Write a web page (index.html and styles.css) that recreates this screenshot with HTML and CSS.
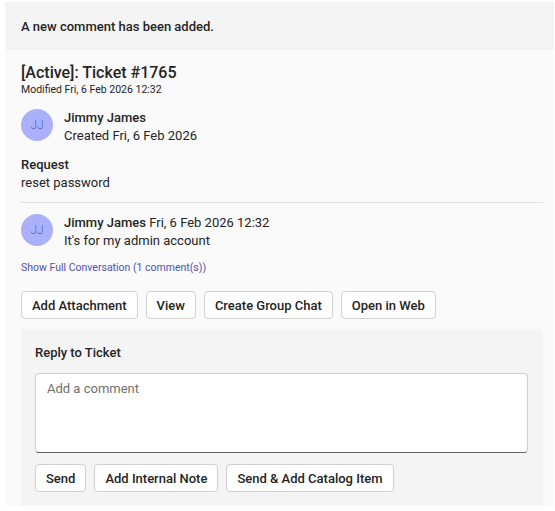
FILE: index.html
```html
<!DOCTYPE html>
<html lang="en">
<head>
  <meta charset="UTF-8" />
  <meta name="viewport" content="width=device-width, initial-scale=1.0" />
  <title>Ticket Card</title>
  <link rel="stylesheet" href="styles.css">
</head>
<body>

  <div class="card">
    <div class="card-header">A new comment has been added.</div>

    <div class="card-body">
      <div class="ticket-title">[Active]: Ticket #1765</div>
      <div class="ticket-modified">Modified Fri, 6 Feb 2026 12:32</div>

      <div class="person">
        <div class="avatar">JJ</div>
        <div class="person-text">
          <div class="person-name">Jimmy James</div>
          <div>Created Fri, 6 Feb 2026</div>
        </div>
      </div>

      <div class="field">
        <div class="field-label">Request</div>
        <div>reset password</div>
      </div>

      <div class="divider"></div>

      <div class="person comment">
        <div class="avatar">JJ</div>
        <div class="person-text">
          <div><span class="person-name">Jimmy James</span> Fri, 6 Feb 2026 12:32</div>
          <div>It's for my admin account</div>
        </div>
      </div>

      <a class="show-more" href="#">Show Full Conversation (1 comment(s))</a>

      <div class="actions">
        <button class="btn">Add Attachment</button>
        <button class="btn">View</button>
        <button class="btn">Create Group Chat</button>
        <button class="btn">Open in Web</button>
      </div>

      <div class="reply">
        <div class="reply-title">Reply to Ticket</div>
        <textarea class="reply-input" placeholder="Add a comment"></textarea>
        <div class="actions reply-actions">
          <button class="btn">Send</button>
          <button class="btn">Add Internal Note</button>
          <button class="btn">Send &amp; Add Catalog Item</button>
        </div>
      </div>
    </div>
  </div>

</body>
</html>
```

FILE: styles.css
```css
* {
  margin: 0;
  padding: 0;
  box-sizing: border-box;
}

body {
  font-family: Roboto, 'Open Sans', sans-serif;
  font-size: 13px;
  color: #242424;
  background: #ffffff;
}

.card {
  margin: 2px 1px 0 5px;
  background: #fafafa;
}

.card-header {
  height: 48px;
  display: flex;
  align-items: center;
  padding: 1px 16px 0;
  background: #f4f4f4;
  font-weight: 500;
}

.card-body {
  padding: 13px 11px 0 16px;
}

.ticket-title {
  font-size: 16px;
  font-weight: 500;
  line-height: 20px;
}

.ticket-modified {
  font-size: 10.5px;
  line-height: 14px;
}

.person {
  display: flex;
  gap: 11px;
  margin-top: 12px;
  line-height: 18px;
}

.avatar {
  width: 32px;
  height: 32px;
  border-radius: 50%;
  background: #aab1fa;
  color: #5b5fc7;
  font-size: 12px;
  font-weight: 300;
  display: flex;
  align-items: center;
  justify-content: center;
  flex-shrink: 0;
}

.person-name {
  font-weight: 500;
}

.field {
  margin-top: 11px;
  line-height: 18px;
}

.field-label {
  font-weight: 500;
}

.divider {
  height: 1px;
  background: #e0e0e0;
  margin-top: 10px;
}

.comment {
  margin-top: 11px;
}

.show-more {
  display: block;
  margin-top: 10px;
  font-size: 10.5px;
  line-height: 16px;
  color: #4f52b2;
  text-decoration: none;
}

.actions {
  display: flex;
  gap: 8px;
  margin-top: 15px;
}

.btn {
  height: 28px;
  padding: 0 10px;
  font-family: inherit;
  font-size: 13px;
  font-weight: 500;
  color: #242424;
  background: #ffffff;
  border: 1px solid #d1d1d1;
  border-radius: 4px;
}

.reply {
  margin-top: 10px;
  padding: 14px 15px 14px 14px;
  background: #f4f4f4;
}

.reply-title {
  font-weight: 500;
  line-height: 20px;
}

.reply-input {
  display: block;
  width: 100%;
  height: 80px;
  margin-top: 10px;
  padding: 7px 11px;
  font-family: inherit;
  font-size: 13px;
  color: #242424;
  background: #ffffff;
  border: 1px solid #d1d1d1;
  border-bottom-color: #616161;
  border-radius: 4px;
  resize: none;
}

.reply-input::placeholder {
  color: #707070;
}

.reply-actions {
  margin-top: 11px;
}
```
